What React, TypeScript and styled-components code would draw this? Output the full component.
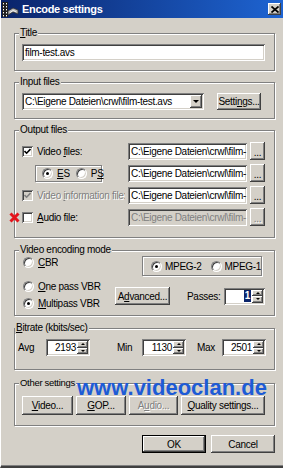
import React from 'react';
import styled, { createGlobalStyle, css } from 'styled-components';

const UI_FONT = '"Liberation Sans", Arial, sans-serif';

const GlobalStyle = createGlobalStyle`
  html, body {
    margin:0;
    padding:0;
    background:#d4d0c8;
  }
  body {
    font-family:${UI_FONT};
    font-size:10px;
    letter-spacing:-0.3px;
    color:#000;
  }
  * {
    box-sizing:border-box;
  }
`;

const sunken = css`
  box-shadow:inset 1px 1px #808080, inset -1px -1px #fff, inset 2px 2px #404040, inset -2px -2px #d4d0c8;
`;

const raised = css`
  background:#d4d0c8;
  box-shadow:inset -1px -1px #404040, inset 1px 1px #fff, inset -2px -2px #808080, inset 2px 2px #d4d0c8;
`;

const etched = css`
  border:1px solid #808080;
  box-shadow:inset 1px 1px #fff, 1px 1px #fff;
`;

const Window = styled.div`
  width:283px;
  height:468px;
  background:#d4d0c8;
  display:flex;
  flex-direction:column;
  border-left:1px solid #fff;
  border-bottom:2px solid #404040;
  box-shadow:inset 0 -1px #808080;
  overflow:hidden;
`;

const TitleBar = styled.div`
  height:18px;
  flex:none;
  display:flex;
  align-items:center;
  padding:0 2px 0 1px;
  background:linear-gradient(90deg, #0a246a 0%, #1e64d2 100%);
  color:#fff;
  font:bold 11px ${UI_FONT};
  letter-spacing:-0.3px;
`;

const TitleText = styled.span`
  margin-left:3px;
`;

const CloseBox = styled.div`
  margin-left:auto;
  width:13px;
  height:12px;
  display:flex;
  align-items:center;
  justify-content:center;
  ${raised}
`;

const Content = styled.div`
  flex:1;
  display:flex;
  flex-direction:column;
  padding:0 8px 0 13px;
`;

const Group = styled.fieldset<{ $top: number; $pad: string }>`
  position:relative;
  margin:${p => p.$top}px 0 0;
  padding:${p => p.$pad};
  min-width:0;
  ${etched}
`;

const Legend = styled.legend<{ $small?: boolean }>`
  margin-left:-3px;
  padding:0 1px;
  line-height:12px;
  font-size:${p => (p.$small ? '9.5px' : '10px')};
  background:#d4d0c8;
`;

const Key = styled.span`
  text-decoration:underline;
  text-underline-offset:1px;
`;

const Label = styled.span<{ $disabled?: boolean }>`
  white-space:nowrap;
  overflow:hidden;
  color:${p => (p.$disabled ? '#808080' : '#000')};
  text-shadow:${p => (p.$disabled ? '1px 1px 0 #fff' : 'none')};
`;

const TextBox = styled.div<{ $disabled?: boolean }>`
  height:17px;
  display:flex;
  align-items:center;
  padding:0 3px;
  white-space:nowrap;
  overflow:hidden;
  background:${p => (p.$disabled ? '#d4d0c8' : '#fff')};
  color:${p => (p.$disabled ? '#808080' : '#000')};
  ${sunken}
`;

const ComboRow = styled.div`
  display:flex;
  align-items:center;
  justify-content:space-between;
  padding-right:4px;
`;

const Combo = styled(TextBox)`
  width:182px;
  padding-right:2px;
`;

const ComboText = styled.span`
  flex:1;
  overflow:hidden;
`;

const DropButton = styled.div`
  width:12px;
  height:13px;
  flex:none;
  display:flex;
  align-items:center;
  justify-content:center;
  ${raised}
`;

const Arrow = styled.span<{ $up?: boolean; $size?: number }>`
  width:0;
  height:0;
  border-left:${p => p.$size ?? 3}px solid transparent;
  border-right:${p => p.$size ?? 3}px solid transparent;
  ${p =>
    p.$up
      ? css`border-bottom:${p.$size ?? 3}px solid #000;`
      : css`border-top:${p.$size ?? 3}px solid #000;`}
`;

const Button = styled.button<{ $w: number; $h?: number; $default?: boolean }>`
  width:${p => p.$w}px;
  height:${p => p.$h ?? 18}px;
  flex:none;
  margin:0;
  padding:0;
  border:none;
  font:inherit;
  letter-spacing:inherit;
  white-space:nowrap;
  display:flex;
  align-items:center;
  justify-content:center;
  color:${p => (p.disabled ? '#808080' : '#000')};
  text-shadow:${p => (p.disabled ? '1px 1px 0 #fff' : 'none')};
  ${raised}
  ${p =>
    p.$default &&
    css`
      box-shadow:inset 0 0 0 1px #000, inset -2px -2px #404040, inset 2px 2px #fff, inset -3px -3px #808080;
    `}
`;

const DotsButton = styled(Button)`
  align-items:flex-end;
  padding-bottom:3px;
  line-height:8px;
`;

const FileRows = styled.div`
  display:flex;
  flex-direction:column;
  gap:4px;
`;

const FileRow = styled.div`
  display:grid;
  grid-template-columns:minmax(0, 1fr) 119px 15px;
  column-gap:3px;
  height:18px;
  align-items:center;
`;

const CheckOption = styled.div`
  position:relative;
  display:flex;
  align-items:center;
  gap:4px;
  min-width:0;
`;

const CheckBox = styled.span<{ $disabled?: boolean }>`
  width:11px;
  height:11px;
  flex:none;
  display:inline-flex;
  align-items:center;
  justify-content:center;
  background:${p => (p.$disabled ? '#d4d0c8' : '#fff')};
  ${sunken}
`;

const RedMark = styled.svg`
  position:absolute;
  left:-13px;
  top:0;
`;

const Etched = styled.div<{ $w: number; $h: number; $ml: number; $pl: number }>`
  width:${p => p.$w}px;
  height:${p => p.$h}px;
  margin-left:${p => p.$ml}px;
  padding-left:${p => p.$pl}px;
  display:flex;
  align-items:center;
  ${etched}
`;

const RadioOption = styled.div<{ $mt?: number; $ml?: number; $gap?: number }>`
  display:flex;
  align-items:center;
  gap:${p => p.$gap ?? 4}px;
  height:12px;
  margin-top:${p => p.$mt ?? 0}px;
  margin-left:${p => p.$ml ?? 0}px;
  white-space:nowrap;
`;

const Radio = styled.span<{ $on?: boolean }>`
  position:relative;
  width:11px;
  height:11px;
  flex:none;
  border-radius:50%;
  background:#fff;
  border:1px solid;
  border-color:#808080 #fff #fff #808080;
  box-shadow:inset 1px 1px #404040, inset -1px -1px #d4d0c8;
  &::after {
    content:'';
    display:${p => (p.$on ? 'block' : 'none')};
    position:absolute;
    left:3px;
    top:3px;
    width:3px;
    height:3px;
    border-radius:50%;
    background:#000;
  }
`;

const ModeLayout = styled.div`
  display:flex;
`;

const RadioColumn = styled.div`
  width:93px;
  display:flex;
  flex-direction:column;
  padding-left:1px;
`;

const ModeRight = styled.div`
  flex:1;
  display:flex;
  flex-direction:column;
`;

const ModeBottom = styled.div`
  display:flex;
  align-items:center;
  margin-top:11px;
`;

const PassesLabel = styled.span`
  margin-left:17px;
`;

const SpinBox = styled.div<{ $w: number; $ml?: string }>`
  width:${p => p.$w}px;
  height:17px;
  margin-left:${p => p.$ml ?? '0'};
  flex:none;
  display:flex;
  padding:2px;
  background:#fff;
  ${sunken}
`;

const SpinValue = styled.div`
  flex:1;
  display:flex;
  align-items:center;
  justify-content:flex-end;
  padding-right:1px;
`;

const Selected = styled.span`
  background:#0a246a;
  color:#fff;
  font-weight:bold;
  padding:0 1px;
  line-height:12px;
`;

const SpinArrows = styled.div`
  width:11px;
  display:flex;
  flex-direction:column;
`;

const SpinArrow = styled.div`
  flex:1;
  display:flex;
  align-items:center;
  justify-content:center;
  ${raised}
`;

const BitrateRow = styled.div`
  display:flex;
  align-items:center;
`;

const FieldLabel = styled.span<{ $w: number; $ml?: number }>`
  width:${p => p.$w}px;
  margin-left:${p => p.$ml ?? 0}px;
  flex:none;
`;

const ButtonRow = styled.div`
  display:flex;
  gap:3px;
`;

const Watermark = styled.span`
  position:absolute;
  left:62px;
  top:-12px;
  font:bold 22px/22px ${UI_FONT};
  color:#1d5bd6;
  white-space:nowrap;
  letter-spacing:0;
`;

const DialogButtons = styled.div`
  display:flex;
  justify-content:flex-end;
  gap:5px;
  margin-top:9px;
`;

function AppIcon() {
  return (
    <svg width="17" height="15" viewBox="0 0 17 15">
      <rect x="0" y="0" width="6" height="15" fill="#202020" />
      {[1, 4, 7, 10, 13].map(y => (
        <React.Fragment key={y}>
          <rect x="1" y={y} width="1" height="1.4" fill="#fff" />
          <rect x="4" y={y} width="1" height="1.4" fill="#fff" />
        </React.Fragment>
      ))}
      <path d="M6 9 L11 6 L16 8 L16 12 L11 10 L6 13 Z" fill="#b8b8b8" stroke="#303030" strokeWidth="0.8" />
      <path d="M8 10.5 L11 8.5 L14 9.6" fill="none" stroke="#fff" strokeWidth="0.8" />
    </svg>
  );
}

function CloseGlyph() {
  return (
    <svg width="8" height="7" viewBox="0 0 8 7">
      <path d="M0.5 0.5 L7.5 6.5 M7.5 0.5 L0.5 6.5" stroke="#000" strokeWidth="1.7" />
    </svg>
  );
}

function Tick({ color }: { color: string }) {
  return (
    <svg width="7" height="7" viewBox="0 0 7 7">
      <polyline points="0.5,3 2.6,5.2 6.5,1" fill="none" stroke={color} strokeWidth="1.6" />
    </svg>
  );
}

function Spinner({ w, value, ml, selected }: { w: number; value: string; ml?: string; selected?: boolean }) {
  return (
    <SpinBox $w={w} $ml={ml}>
      <SpinValue>{selected ? <Selected>{value}</Selected> : value}</SpinValue>
      <SpinArrows>
        <SpinArrow>
          <Arrow $up $size={2} />
        </SpinArrow>
        <SpinArrow>
          <Arrow $size={2} />
        </SpinArrow>
      </SpinArrows>
    </SpinBox>
  );
}

const PATH = 'C:\\Eigene Dateien\\crwl\\film-test.avs';
const PATH_CUT = 'C:\\Eigene Dateien\\crwl\\film-';

export default function App() {
  return (
    <>
      <GlobalStyle />
      <Window>
        <TitleBar>
          <AppIcon />
          <TitleText>Encode settings</TitleText>
          <CloseBox>
            <CloseGlyph />
          </CloseBox>
        </TitleBar>

        <Content>
          <Group $top={9} $pad="5px 9px 9px 7px">
            <Legend>
              <Key>T</Key>itle
            </Legend>
            <TextBox>film-test.avs</TextBox>
          </Group>

          <Group $top={5} $pad="5px 9px 8px 7px">
            <Legend>Input files</Legend>
            <ComboRow>
              <Combo>
                <ComboText>{PATH}</ComboText>
                <DropButton>
                  <Arrow $size={3} />
                </DropButton>
              </Combo>
              <Button $w={44} $h={17}>
                Setti<Key>n</Key>gs...
              </Button>
            </ComboRow>
          </Group>

          <Group $top={5} $pad="6px 9px 11px 7px">
            <Legend>Output files</Legend>
            <FileRows>
              <FileRow>
                <CheckOption>
                  <CheckBox>
                    <Tick color="#000" />
                  </CheckBox>
                  <Label>
                    Video <Key>f</Key>iles:
                  </Label>
                </CheckOption>
                <TextBox>{PATH_CUT}</TextBox>
                <DotsButton $w={15}>...</DotsButton>
              </FileRow>
              <FileRow>
                <Etched $w={67} $h={17} $ml={13} $pl={6}>
                  <RadioOption>
                    <Radio $on />
                    <Label>
                      <Key>E</Key>S
                    </Label>
                  </RadioOption>
                  <RadioOption $ml={6}>
                    <Radio />
                    <Label>
                      P<Key>S</Key>
                    </Label>
                  </RadioOption>
                </Etched>
                <TextBox>{PATH_CUT}</TextBox>
                <DotsButton $w={15}>...</DotsButton>
              </FileRow>
              <FileRow>
                <CheckOption>
                  <CheckBox $disabled>
                    <Tick color="#808080" />
                  </CheckBox>
                  <Label $disabled>
                    Video <Key>i</Key>nformation file:
                  </Label>
                </CheckOption>
                <TextBox>{PATH_CUT}</TextBox>
                <DotsButton $w={15}>...</DotsButton>
              </FileRow>
              <FileRow>
                <CheckOption>
                  <RedMark width="11" height="11" viewBox="0 0 11 11">
                    <path d="M1.5 1.5 L9.5 9.5 M9.5 1.5 L1.5 9.5" stroke="#e4141c" strokeWidth="3" />
                  </RedMark>
                  <CheckBox />
                  <Label>
                    <Key>A</Key>udio file:
                  </Label>
                </CheckOption>
                <TextBox $disabled>{PATH_CUT}</TextBox>
                <DotsButton $w={15} disabled>
                  ...
                </DotsButton>
              </FileRow>
            </FileRows>
          </Group>

          <Group $top={6} $pad="0 9px 6px 7px">
            <Legend>Video encoding mode</Legend>
            <ModeLayout>
              <RadioColumn>
                <RadioOption>
                  <Radio />
                  <Label>
                    <Key>C</Key>BR
                  </Label>
                </RadioOption>
                <RadioOption $mt={12}>
                  <Radio />
                  <Label>
                    <Key>O</Key>ne pass VBR
                  </Label>
                </RadioOption>
                <RadioOption $mt={5}>
                  <Radio $on />
                  <Label>
                    <Key>M</Key>ultipass VBR
                  </Label>
                </RadioOption>
              </RadioColumn>
              <ModeRight>
                <Etched $w={120} $h={20} $ml={27} $pl={8}>
                  <RadioOption $gap={3}>
                    <Radio $on />
                    <Label>MPEG-2</Label>
                  </RadioOption>
                  <RadioOption $ml={9} $gap={3}>
                    <Radio />
                    <Label>MPEG-1</Label>
                  </RadioOption>
                </Etched>
                <ModeBottom>
                  <Button $w={55}>
                    A<Key>d</Key>vanced...
                  </Button>
                  <PassesLabel>Passes:</PassesLabel>
                  <Spinner w={41} value="1" ml="auto" selected />
                </ModeBottom>
              </ModeRight>
            </ModeLayout>
          </Group>

          <Group $top={6} $pad="5px 8px 13px 3px">
            <Legend>
              <Key>B</Key>itrate (kbits/sec)
            </Legend>
            <BitrateRow>
              <FieldLabel $w={28}>Avg</FieldLabel>
              <Spinner w={44} value="2193" />
              <FieldLabel $w={25} $ml={27}>
                Min
              </FieldLabel>
              <Spinner w={44} value="1130" />
              <FieldLabel $w={25} $ml={11}>
                Max
              </FieldLabel>
              <Spinner w={44} value="2501" />
            </BitrateRow>
          </Group>

          <Group $top={7} $pad="7px 9px 10px 7px">
            <Legend $small>Other settings</Legend>
            <Watermark>www.videoclan.de</Watermark>
            <ButtonRow>
              <Button $w={51} $h={19}>
                <Key>V</Key>ideo...
              </Button>
              <Button $w={50} $h={19}>
                <Key>G</Key>OP...
              </Button>
              <Button $w={49} $h={19} disabled>
                A<Key>u</Key>dio...
              </Button>
              <Button $w={84} $h={19}>
                <Key>Q</Key>uality settings...
              </Button>
            </ButtonRow>
          </Group>

          <DialogButtons>
            <Button $w={64} $default>
              OK
            </Button>
            <Button $w={64}>Cancel</Button>
          </DialogButtons>
        </Content>
      </Window>
    </>
  );
}
